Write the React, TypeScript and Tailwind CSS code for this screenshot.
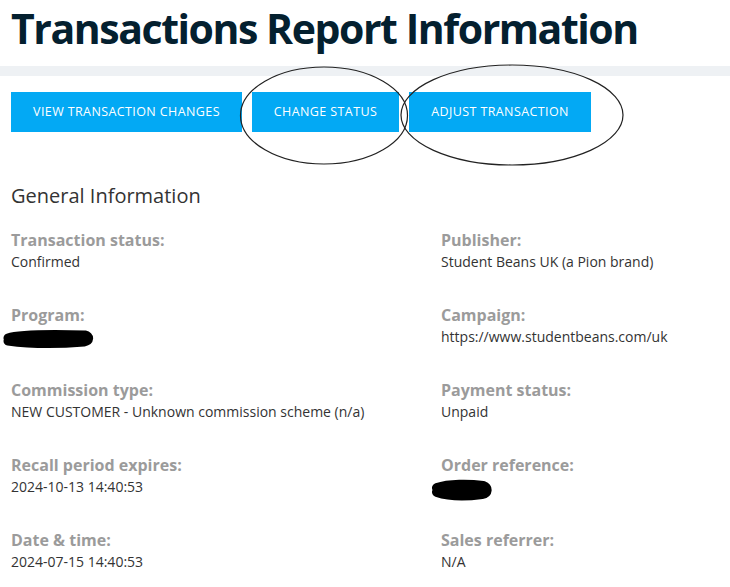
import React from "react";

const left = [
  { label: "Transaction status:", value: "Confirmed" },
  { label: "Program:", value: "", scribble: "program" },
  { label: "Commission type:", value: "NEW CUSTOMER - Unknown commission scheme (n/a)" },
  { label: "Recall period expires:", value: "2024-10-13 14:40:53" },
  { label: "Date & time:", value: "2024-07-15 14:40:53" },
];
const right = [
  { label: "Publisher:", value: "Student Beans UK (a Pion brand)" },
  { label: "Campaign:", value: "https://www.studentbeans.com/uk" },
  { label: "Payment status:", value: "Unpaid" },
  { label: "Order reference:", value: "", scribble: "order" },
  { label: "Sales referrer:", value: "N/A" },
];

type Item = { label: string; value: string; scribble?: string };

function Field({ item }: { item: Item }) {
  return (
    <div className="relative mb-[33px]">
      <div className="text-[16px] leading-[21px] font-bold text-[#9b9b9b]">{item.label}</div>
      <div className="text-[14px] leading-[21px] text-[#333]">{item.value || "\u00a0"}</div>
      {item.scribble === "program" && (
        <svg className="absolute left-[-11px] top-[20px]" width="100" height="24" viewBox="0 0 100 24">
          <path d="M8 13 C20 9, 50 9, 85 10 C90 11, 90 16, 84 17 C60 19, 30 19, 8 16" stroke="#000" strokeWidth="9" strokeLinecap="round" strokeLinejoin="round" fill="#000" />
        </svg>
      )}
      {item.scribble === "order" && (
        <svg className="absolute left-[-12px] top-[21px]" width="66" height="26" viewBox="0 0 66 26">
          <path d="M8 12 C20 8, 40 8, 54 10 C59 12, 59 17, 53 18 C38 20, 20 20, 8 16" stroke="#000" strokeWidth="10" strokeLinecap="round" strokeLinejoin="round" fill="#000" />
        </svg>
      )}
    </div>
  );
}

export default function App() {
  return (
    <div className="relative w-[730px] h-[587px] overflow-hidden bg-white" style={{ fontFamily: '"Open Sans", sans-serif' }}>
      <h1 className="pl-[11px] text-[41px] leading-[57px] font-bold text-[#04202f] tracking-[-1.45px]">
        Transactions Report Information
      </h1>
      <div className="mt-[9px] h-[10px] bg-[#eef1f4]" />
      <div className="mt-[16px] flex gap-[10px] pl-[11px]">
        <button className="h-[40px] w-[231px] bg-[#03a9f4] text-white text-[12.5px] tracking-[0.4px] pt-[1px]">VIEW TRANSACTION CHANGES</button>
        <button className="h-[40px] w-[147px] bg-[#03a9f4] text-white text-[12.5px] tracking-[0.4px] pt-[1px]">CHANGE STATUS</button>
        <button className="h-[40px] w-[182px] bg-[#03a9f4] text-white text-[12.5px] tracking-[0.4px] pt-[1px]">ADJUST TRANSACTION</button>
      </div>
      <h2 className="mt-[50px] pl-[11px] text-[20px] leading-[28px] text-[#333]">General Information</h2>
      <div className="mt-[20px] grid grid-cols-[430px_1fr] pl-[11px]">
        <div>
          {left.map((it) => (
            <Field key={it.label} item={it} />
          ))}
        </div>
        <div>
          {right.map((it) => (
            <Field key={it.label} item={it} />
          ))}
        </div>
      </div>
      <svg className="absolute left-0 top-0 pointer-events-none" width="730" height="587">
        <ellipse cx="324" cy="115.5" rx="83.5" ry="48.5" fill="none" stroke="#222" strokeWidth="1.2" />
        <ellipse cx="512" cy="115" rx="111" ry="50" fill="none" stroke="#222" strokeWidth="1.2" />
      </svg>
    </div>
  );
}
